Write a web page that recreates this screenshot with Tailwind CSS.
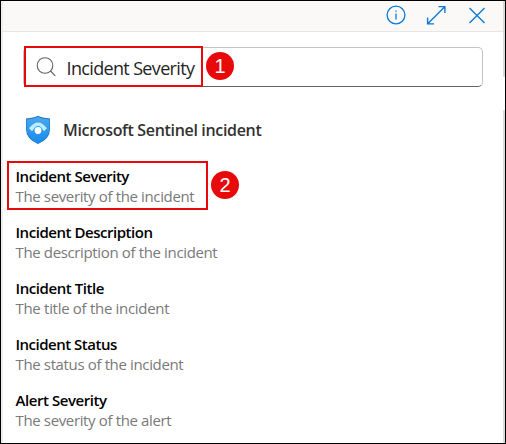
<!DOCTYPE html>
<html lang="en">
<head>
<meta charset="utf-8">
<title>Dynamic content</title>
<script src="https://cdn.jsdelivr.net/npm/@tailwindcss/browser@4"></script>
</head>
<body class="bg-white">
<div class="relative flex h-[444px] w-[506px] flex-col overflow-hidden border border-black bg-white font-['Open_Sans','Noto_Sans',sans-serif]">
  <div class="absolute left-0 top-0 h-full w-[2px] bg-[#f0eeed]"></div>
  <div class="absolute right-0 top-0 h-[76px] w-[2px] rounded-b-full bg-[#d9d9d9]"></div>
  <div class="absolute right-0 top-[109px] bottom-0 w-[2px] rounded-t-full bg-[#d9d9d9]"></div>
  <header class="mr-[2px] flex h-[31px] shrink-0 items-center justify-end border-b border-[#e8e6e4] bg-[#faf9f8] pr-[16px] pb-[3px] text-[#0f78d4]">
    <svg class="mr-5 size-5" viewBox="0 0 20 20" fill="none" stroke="currentColor" stroke-width="1.3"><circle cx="10" cy="10" r="8.9"/><path d="M10 8.500v6"/><path d="M10 5.400v1.400" stroke-width="1.4"/></svg>
    <svg class="mr-[21px] size-5" viewBox="0 0 20 20" fill="none" stroke="currentColor" stroke-width="1.4"><path d="M2 18.500L18.500 2M12.500 1.600H18.900V8M1.600 12.500V18.900H8"/></svg>
    <svg class="size-5" viewBox="0 0 20 20" fill="none" stroke="currentColor" stroke-width="1.4"><path d="M2.500 3L17.500 18M17.500 3L2.500 18"/></svg>
  </header>
  <div class="relative mt-[15px] ml-[22px] flex h-10 w-[460px] items-center rounded-[5px] border border-[#c4c4c4] border-b-[#616161] pl-[12px]">
    <svg class="size-5" viewBox="0 0 20 20" fill="none" stroke="#616161" stroke-width="1.1"><circle cx="9" cy="8.500" r="7.800"/><path d="M14.500 14L19.300 18.800"/></svg>
    <span class="mt-0.5 ml-[10.5px] whitespace-nowrap text-[18px] leading-6 tracking-[-0.65px] text-[#242424]">Incident Severity</span>
    <div class="absolute left-0 -top-[2px] h-[41px] w-[179px] border-2 border-[#e80a0a]"></div>
    <div class="absolute left-[182px] top-[4px] flex size-7 items-center justify-center rounded-full bg-[#e80a0a] font-['Liberation_Sans',sans-serif] text-[20px] leading-none text-white">1</div>
  </div>
  <div class="mt-[28px] ml-[24px] flex h-8 items-center">
    <svg class="-mt-0.5 h-[30px] w-[26px]" viewBox="0 0 26 30"><defs><linearGradient id="g" x1="0" y1="0" x2="0" y2="1"><stop stop-color="#4fa5ec"/><stop offset="1" stop-color="#168bea"/></linearGradient></defs><path fill="#1976c5" d="M13 .8Q17 3 25 3.500V14Q25 24 13 29Q1 24 1 14V3.500Q9 3 13 .8Z"/><path fill="url(#g)" d="M13 1.800Q17 4 24.400 4.500V14Q24 23.500 13 28.500Q2 23.500 1.600 14V4.500Q9 4 13 1.800Z"/><path d="M4 13.200Q13 1.800 22 13.200L19 16.200Q13 8.500 7 16.200Z" fill="#b8edff"/><circle cx="13" cy="15.500" r="4.400" fill="#269bef"/><circle cx="13" cy="15.500" r="3.400" fill="#fff"/></svg>
    <h1 class="-mt-0.5 ml-3 whitespace-nowrap text-[16px] font-semibold leading-6 tracking-[-0.33px] text-[#323130]">Microsoft Sentinel incident</h1>
  </div>
  <ul class="relative mt-[19px] ml-[14.5px] flex flex-col gap-4 whitespace-nowrap text-[15px] leading-5">
    <li><p class="font-semibold tracking-[-0.46px] text-black">Incident Severity</p><p class="tracking-[-0.36px] text-[#797979]">The severity of the incident</p></li>
    <li><p class="font-semibold tracking-[-0.46px] text-black">Incident Description</p><p class="tracking-[-0.36px] text-[#797979]">The description of the incident</p></li>
    <li><p class="font-semibold tracking-[-0.43px] text-black">Incident Title</p><p class="tracking-[-0.3px] text-[#797979]">The title of the incident</p></li>
    <li><p class="font-semibold tracking-[-0.5px] text-black">Incident Status</p><p class="tracking-[-0.36px] text-[#797979]">The status of the incident</p></li>
    <li><p class="font-semibold tracking-[-0.43px] text-black">Alert Severity</p><p class="tracking-[-0.36px] text-[#797979]">The severity of the alert</p></li>
    <li class="absolute -left-[8.5px] -top-[5px] h-[49px] w-[201px] border-2 border-[#e80a0a]"></li>
    <li class="absolute left-[195.5px] top-[5px] flex size-7 items-center justify-center rounded-full bg-[#e80a0a] font-['Liberation_Sans',sans-serif] text-[20px] leading-none text-white">2</li>
  </ul>
</div>
</body>
</html>
